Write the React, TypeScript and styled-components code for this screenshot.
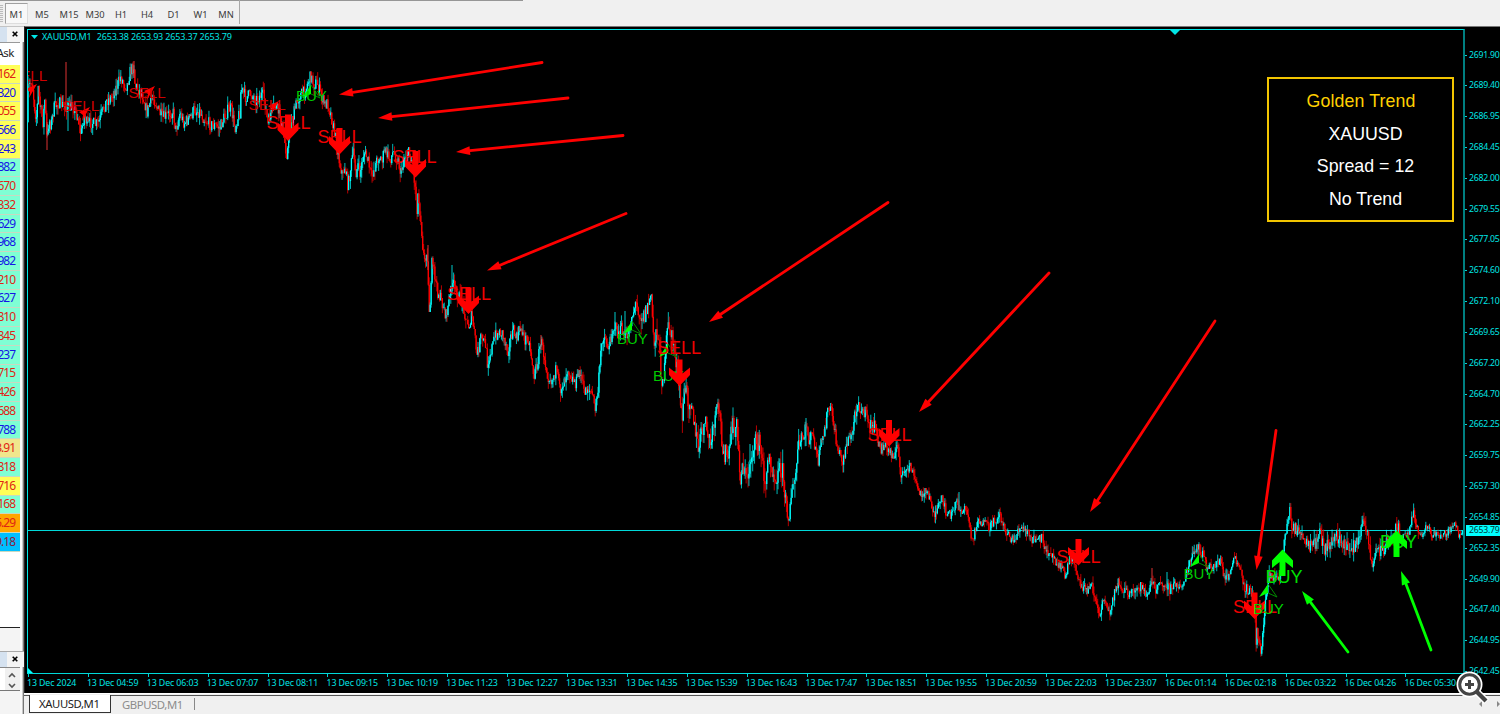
import styled, { createGlobalStyle, css } from 'styled-components';

const GlobalStyle = createGlobalStyle`
  * { box-sizing: border-box; }
  body {
    margin: 0;
    overflow: hidden;
    background: #f0f0f0;
    font-family: 'Noto Sans', 'Open Sans', sans-serif;
  }
`;

/* ── Data ─────────────────────────────────────────────────────────── */
const TIMEFRAMES = [
  { label: 'M1', width: 27 },
  { label: 'M5', width: 28 },
  { label: 'M15', width: 26 },
  { label: 'M30', width: 26 },
  { label: 'H1', width: 26 },
  { label: 'H4', width: 26 },
  { label: 'D1', width: 27 },
  { label: 'W1', width: 27 },
  { label: 'MN', width: 24 },
];

const YELLOW = '#ffff57';
const AQUA = '#7fffd4';
const UP = '#1414e6';
const DOWN = '#e02314';

const QUOTES: [string, string, string][] = [
  ['162', YELLOW, DOWN],
  ['320', YELLOW, UP],
  ['055', YELLOW, DOWN],
  ['566', YELLOW, UP],
  ['243', YELLOW, UP],
  ['882', AQUA, UP],
  ['670', AQUA, DOWN],
  ['332', AQUA, DOWN],
  ['629', AQUA, UP],
  ['968', AQUA, UP],
  ['982', AQUA, UP],
  ['210', AQUA, DOWN],
  ['627', AQUA, UP],
  ['810', AQUA, DOWN],
  ['845', AQUA, DOWN],
  ['237', AQUA, UP],
  ['715', AQUA, DOWN],
  ['426', AQUA, DOWN],
  ['688', AQUA, DOWN],
  ['788', AQUA, UP],
  ['3.91', '#f0e68c', DOWN],
  ['818', AQUA, DOWN],
  ['716', YELLOW, DOWN],
  ['168', AQUA, DOWN],
  ['5.29', '#ffa500', DOWN],
  ['9.18', '#00bfff', '#8c1c3c'],
];

const PRICES = [
  '2691.90', '2689.40', '2686.95', '2684.45', '2682.00', '2679.55', '2677.05',
  '2674.60', '2672.10', '2669.65', '2667.20', '2664.70', '2662.25', '2659.75',
  '2657.30', '2654.85', '2652.35', '2649.90', '2647.40', '2644.95', '2642.45',
];

const TIMES = [
  '13 Dec 2024', '13 Dec 04:59', '13 Dec 06:03', '13 Dec 07:07', '13 Dec 08:11',
  '13 Dec 09:15', '13 Dec 10:19', '13 Dec 11:23', '13 Dec 12:27', '13 Dec 13:31',
  '13 Dec 14:35', '13 Dec 15:39', '13 Dec 16:43', '13 Dec 17:47', '13 Dec 18:51',
  '13 Dec 19:55', '13 Dec 20:59', '13 Dec 22:03', '13 Dec 23:07', '16 Dec 01:14',
  '16 Dec 02:18', '16 Dec 03:22', '16 Dec 04:26', '16 Dec 05:30',
];

// swing points of the series
const SWINGS = `27,122 28,90 32,80 35,112 37,118 38,85 40,105 43,122 45,98 47,142 49,120
51,125 54,108 58,103 62,104 65,110 67,105 70,108 73,105 78,118 81,135 84,115 88,125 92,122
95,125 99,122 104,108 107,100 111,98 115,90 118,84 121,77 124,84 127,86 130,72 134,66 135,85
139,90 143,96 147,112 151,100 154,98 158,110 163,118 168,115 173,111 176,130 180,113 184,123
190,118 194,110 200,112 205,120 211,125 217,126 220,128 224,118 228,110 231,108 235,128
237,120 240,112 241,88 246,98 251,93 256,100 261,95 264,96 268,125 270,115 275,105 280,115
287,155 290,130 296,105 300,95 305,92 308,82 311,76 314,85 317,82 321,95 325,105 328,103
331,115 335,135 340,165 343,175 345,166 348,186 353,152 356,173 358,165 360,174 364,152
368,160 371,176 374,170 378,157 382,160 385,150 390,160 393,152 398,160 401,174 404,158
408,152 412,160 415,185 417,209 418,195 421,220 423,250 425,265 427,243 429,312 431,292
432,264 434,270 437,290 439,295 443,305 446,316 450,297 452,280 456,293 460,298 464,308
467,325 469,326 472,315 474,330 477,356 481,337 486,345 487,364 492,347 496,334 502,332
508,350 511,336 514,331 516,340 521,327 525,340 528,336 532,360 534,378 538,360 541,340
545,360 548,376 552,380 556,370 560,390 565,378 568,367 572,378 576,383 580,370 584,391
588,388 592,393 595,409 598,390 602,340 604,335 609,350 612,330 615,326 618,334 622,328
624,338 627,338 632,316 636,303 640,315 645,315 648,305 651,294 654,345 657,325 660,360
662,380 665,370 666,342 669,323 671,335 674,345 678,378 682,418 685,388 689,400 692,400
695,433 699,450 702,428 706,427 711,445 715,418 719,407 723,450 729,458 732,427 737,427
740,478 743,465 747,481 752,452 757,440 760,445 765,482 770,457 775,478 781,468 783,472
785,498 787,512 789,513 791,495 794,488 796,470 798,452 802,436 804,440 806,423 809,440
812,435 815,445 818,463 821,445 824,435 828,408 832,413 837,447 843,461 846,445 852,435
855,415 858,400 862,414 865,412 870,425 875,427 880,450 884,445 888,450 892,454 898,450
901,474 906,474 910,465 915,480 920,495 925,490 930,500 935,515 942,500 947,514 952,515
957,500 960,510 967,511 969,520 972,543 975,530 978,520 985,525 990,528 995,520 1000,514
1004,528 1009,535 1014,543 1018,530 1025,530 1033,540 1038,540 1043,538 1046,555 1050,549
1055,560 1061,565 1065,578 1070,557 1075,562 1080,585 1087,590 1092,585 1098,610 1100,623
1102,600 1105,598 1109,615 1112,600 1118,583 1124,590 1130,595 1136,590 1142,585 1147,597
1152,583 1156,590 1160,585 1165,582 1170,590 1175,585 1180,587 1185,580 1190,562 1198,547
1203,555 1208,570 1212,568 1218,561 1221,562 1224,579 1229,575 1235,559 1240,570 1245,589
1251,590 1255,610 1256,645 1257,628 1261,654 1264,620 1266,592 1269,573 1275,580 1280,575
1283,552 1286,530 1290,511 1293,530 1297,528 1302,540 1306,545 1312,549 1320,533 1324,549
1330,544 1336,536 1343,545 1350,549 1356,544 1360,535 1364,522 1367,526 1372,568 1376,550
1382,549 1390,540 1398,526 1402,540 1408,534 1413,511 1417,525 1420,537 1427,526 1432,534
1440,536 1448,532 1455,524 1459,536 1463,530`
  .split(/\s+/)
  .map(p => p.split(',').map(Number));

const EXTRA_WICKS = [
  [66, 62, 112, 1], [68, 98, 131, 0], [47, 122, 150, 1], [134, 61, 78, 1],
  [452, 265, 295, 0], [541, 335, 350, 1], [615, 312, 330, 0], [625, 311, 335, 0],
  [806, 418, 446, 0], [959, 492, 510, 0], [1152, 568, 585, 1], [1167, 572, 588, 0],
  [718, 402, 414, 1], [750, 444, 462, 0], [758, 432, 455, 1], [428, 245, 270, 1],
];

const BAR_STEP = 0.9375;

type Bar = { x: number; open: number; close: number; high: number; low: number };

const amplitude = (x: number) => {
  if (x > 640 && x < 800) return 20;
  if (x > 1290 && x < 1400) return 14;
  if (x > 1420) return 7;
  return x > 900 ? 10 : 12.5;
};

const buildBars = (): Bar[] => {
  let seed = 7;
  const rand = () => {
    seed = (seed * 16807) % 2147483647;
    return seed / 2147483647;
  };
  const bars: Bar[] = [];
  let open = SWINGS[0][1];
  let i = 0;
  for (let x = 28; x < 1463; x += BAR_STEP) {
    while (i < SWINGS.length - 2 && SWINGS[i + 1][0] < x) i += 1;
    const [x0, y0] = SWINGS[i];
    const [x1, y1] = SWINGS[i + 1];
    const amp = amplitude(x);
    const mid = y0 + ((y1 - y0) * (x - x0)) / (x1 - x0);
    const close = mid + (rand() - 0.5) * amp;
    const high = Math.min(open, close) - rand() ** 2 * amp * 0.7;
    const low = Math.max(open, close) + rand() ** 2 * amp * 0.7;
    bars.push({ x, open, close, high, low });
    open = close;
  }
  return bars;
};

const BARS = buildBars();

// [text, x, baseline, font size]
const SIGNALS: [string, number, number, number][] = [
  ['SELL', 10, 81, 15.2],
  ['SELL', 62, 111, 15.2],
  ['SELL', 128.5, 97.5, 15.2],
  ['SELL', 248.5, 109.5, 15.2],
  ['SELL', 266.5, 129, 18],
  ['SELL', 317.5, 143, 18],
  ['SELL', 392.5, 163, 18],
  ['SELL', 447, 300, 18],
  ['SELL', 657, 354, 18],
  ['SELL', 867.5, 441, 18],
  ['SELL', 1056.5, 563, 18],
  ['SELL', 1233, 613, 18],
  ['BUY', 296, 101, 15],
  ['BUY', 617, 344, 15],
  ['BUY', 653, 380.5, 15],
  ['BUY', 1183.5, 578.5, 15],
  ['BUY', 1265.5, 583, 18],
  ['BUY', 1380, 548, 18],
];

const DOWN_ARROWS = [
  [288, 141], [339.5, 154.5], [415.5, 177.5], [468.5, 314],
  [679.5, 386], [889, 446.5], [1078.5, 565.5], [1254.5, 619],
];
const UP_ARROWS = [[1282.5, 549.5], [1396.5, 530.5]];
const SELL_WEDGES = [[37, 84], [90, 107], [155, 86], [279, 101]];
const BUY_WEDGES = [[311, 85], [632, 321], [668, 344], [1199, 554], [1268, 584]];

// [tail x, tail y, tip x, tip y, colour]
const POINTERS: [number, number, number, number, string][] = [
  [542, 62.5, 339, 94.5, '#f00'],
  [568, 98, 378, 118, '#f00'],
  [623, 135.5, 456, 152, '#f00'],
  [626, 213.5, 487, 270.5, '#f00'],
  [888, 202.5, 709, 322, '#f00'],
  [1049, 273, 919, 412, '#f00'],
  [1215, 321, 1090, 512, '#f00'],
  [1276, 430.5, 1256.5, 570, '#f00'],
  [1348, 652, 1302, 591, '#0f0'],
  [1431, 650, 1401, 571, '#0f0'],
];

/* ── Shell ────────────────────────────────────────────────────────── */
const Terminal = styled.div`
  width: 1500px;
  height: 714px;
  display: flex;
  flex-direction: column;
  background: #f0f0f0;
  position: relative;
  overflow: hidden;
`;

const Toolbar = styled.div`
  height: 26px;
  flex: none;
  display: flex;
  align-items: flex-start;
  background: linear-gradient(#969696, #969696) 0 0 / 523px 1px no-repeat, #f0f0f0;
`;

const Grip = styled.div`
  width: 3px;
  height: 18px;
  margin: 5px 2px 0 0;
  background: repeating-linear-gradient(#bbb 0 1px, #eee 1px 2px);
`;

const Timeframes = styled.div`
  display: flex;
  width: 235px;
  height: 24px;
  padding-top: 3px;
  border-right: 1px solid #a8a8a8;
`;

const Timeframe = styled.div<{ $width: number; $active?: boolean }>`
  width: ${({ $width }) => $width}px;
  flex: none;
  height: 21px;
  display: flex;
  align-items: center;
  justify-content: center;
  font-size: 9.3px;
  color: #3c3c3c;
  padding-top: 2px;
  ${({ $active }) =>
    $active &&
    css`
      width: 23px;
      border: 1px solid #a0a0a0;
      border-right-color: #ddd;
      border-bottom-color: #ddd;
      background: #f8f8f8;
    `}
`;

const Workspace = styled.div`
  flex: 1;
  display: flex;
  min-height: 0;
`;

/* ── Market watch ─────────────────────────────────────────────────── */
const Side = styled.div`
  width: 24px;
  flex: none;
  display: flex;
  flex-direction: column;
  border-top: 1px solid #c4c4c4;
  background: linear-gradient(to right, #f4f4f4 20px, #fafafa 20px 22px, #c8c8c8 22px 23px, #777 23px);
`;

const PaneHead = styled.div`
  height: 15px;
  flex: none;
  display: flex;
  justify-content: flex-end;
  align-items: center;
  padding: 0 6px 1px 0;
  background: linear-gradient(to right, #d5e2f0 7px, #f4f4f4 7px);
`;

const ColumnHead = styled.div`
  width: 20px;
  height: 23px;
  flex: none;
  display: flex;
  align-items: center;
  justify-content: flex-end;
  padding: 0 6px 3px 0;
  border-top: 1px solid #999;
  background: #fff;
  font-size: 11.5px;
  letter-spacing: -0.5px;
  color: #222;
`;

const QuoteList = styled.div`
  width: 20px;
  height: 563px;
  flex: none;
  background: #fff;
  border-bottom: 1px solid #222;
`;

const Quote = styled.div<{ $bg: string; $color: string }>`
  width: 20px;
  height: 18.72px;
  display: flex;
  align-items: center;
  justify-content: flex-end;
  padding: 0 5px 1px 0;
  overflow: hidden;
  background: ${({ $bg }) => $bg};
  border-bottom: 1px solid #c9d8c0;
  color: ${({ $color }) => $color};
  font-size: 12px;
  letter-spacing: -1px;
`;

const SideGap = styled.div`
  height: 24px;
  flex: none;
  border-bottom: 1px solid #a8a8a8;
`;

const Scroller = styled.div`
  width: 20px;
  height: 24px;
  flex: none;
  display: flex;
  justify-content: flex-end;
  padding-right: 4px;
  border-top: 1px solid #888;
  border-bottom: 1px solid #777;
  background: linear-gradient(to right, #fff 5px, #f0f0f0 5px);
`;

/* ── Chart ────────────────────────────────────────────────────────── */
const Main = styled.div`
  flex: 1;
  min-width: 0;
  display: flex;
  flex-direction: column;
`;

const Window = styled.div`
  height: 667px;
  flex: none;
  display: grid;
  grid-template-columns: 1440px 35px;
  grid-template-rows: 645px 1fr;
  padding-top: 2px;
  background: #000;
  border-top: 1px solid #777;
  border-left: 1px solid #222;
  position: relative;
`;

const Plot = styled.div`
  margin-left: 2px;
  border: 1px solid #00e6e6;
  border-right: 2px solid #007f80;
  border-bottom-color: #00d8d8;
  position: relative;
`;

const Canvas = styled.svg`
  display: block;
  width: 1435px;
  height: 643px;
`;

const Caption = styled.div`
  position: absolute;
  left: 3px;
  top: 1px;
  display: flex;
  align-items: center;
  gap: 4px;
  color: #00e6e6;
  font-size: 9px;
  letter-spacing: -0.17px;
  line-height: 12px;
  white-space: pre;
`;

const Ohlc = styled.span`
  margin-left: -1px;
`;

const PriceAxis = styled.div`
  display: flex;
  flex-direction: column;
  padding-top: 10.5px;
  height: 660px;
`;

const Price = styled.div`
  height: 30.83px;
  flex: none;
  display: flex;
  align-items: flex-start;
  font-size: 8.7px;
  line-height: 31px;
  color: #00e6e6;
  white-space: nowrap;
  letter-spacing: -0.25px;
  &::before {
    content: '';
    width: 2px;
    height: 1px;
    margin: 15px 2px 0 0;
    background: #00d4d4;
  }
`;

const LastPrice = styled.div`
  position: absolute;
  right: 0;
  top: 498px;
  width: 34px;
  height: 11px;
  padding-left: 3px;
  overflow: hidden;
  background: #0ff;
  color: #003838;
  font-size: 8.7px;
  line-height: 11px;
  letter-spacing: -0.25px;
`;

const TimeAxis = styled.div`
  grid-column: 1 / -1;
  display: flex;
  padding-left: 2px;
`;

const Time = styled.div`
  width: 59.9px;
  flex: none;
  color: #00e6e6;
  font-size: 8.8px;
  line-height: 12px;
  white-space: nowrap;
  letter-spacing: -0.1px;
  &::before {
    content: '';
    display: block;
    width: 1px;
    height: 3px;
    margin-left: 1px;
    background: #00d4d4;
  }
`;

const InfoPanel = styled.div`
  position: absolute;
  left: 1239px;
  top: 47px;
  width: 187px;
  height: 145px;
  border: 2px solid #f2c500;
  background: #000;
  display: flex;
  flex-direction: column;
  align-items: center;
  padding: 6px 0 0 10px;
  font-family: 'Liberation Sans', Arial, sans-serif;
  font-size: 17.8px;
  line-height: 32.7px;
  color: #fff;
`;

const InfoTitle = styled.div`
  color: #ffd000;
  margin-right: 9px;
  letter-spacing: 0.1px;
`;

const InfoLine = styled.div`
  letter-spacing: 0;
`;

const Signal = styled.text`
  font-family: 'Liberation Sans', Arial, sans-serif;
`;

/* ── Chart tabs ───────────────────────────────────────────────────── */
const Tabs = styled.div`
  flex: 1;
  display: flex;
  border-top: 1px solid #fff;
  padding-left: 5px;
  background: linear-gradient(#555, #555) 0 1px / 100% 1px no-repeat, #f0f0f0;
`;

const Tab = styled.div<{ $active?: boolean }>`
  height: 18px;
  margin-top: 1px;
  display: flex;
  align-items: center;
  font-size: 11.3px;
  letter-spacing: -0.4px;
  color: #8c8c8c;
  padding-left: 11px;
  ${({ $active }) =>
    $active &&
    css`
      width: 82px;
      padding-left: 9px;
      background: #fff;
      color: #222;
      border: solid #333;
      border-width: 0 1px 1px 1px;
    `}
`;

const TabDivider = styled.div`
  width: 1px;
  height: 12px;
  margin: 4px 0 0 11px;
  background: #888;
`;

const TabArrows = styled.svg`
  width: 24px;
  height: 12px;
  margin: 5px 0 0 auto;
`;

const ZoomBadge = styled.svg`
  position: absolute;
  left: 1455px;
  top: 670px;
  width: 34px;
  height: 34px;
`;

/* ── Drawings ─────────────────────────────────────────────────────── */
const CloseIcon = () => (
  <svg width="6" height="6" viewBox="0 0 6 6">
    <path d="M.7.7 5.3 5.3M5.3.7.7 5.3" stroke="#000" strokeWidth="1.6" />
  </svg>
);

const Pointer = ({ from, to, color }: { from: number[]; to: number[]; color: string }) => {
  const len = Math.hypot(to[0] - from[0], to[1] - from[1]);
  const ux = (to[0] - from[0]) / len;
  const uy = (to[1] - from[1]) / len;
  const bx = to[0] - ux * 14;
  const by = to[1] - uy * 14;
  return (
    <g stroke={color} fill={color}>
      <line x1={from[0]} y1={from[1]} x2={bx} y2={by} strokeWidth="2.8" strokeLinecap="round" />
      <polygon
        strokeWidth="0"
        points={`${to[0]},${to[1]} ${bx - uy * 4.3},${by + ux * 4.3} ${bx + uy * 4.3},${by - ux * 4.3}`}
      />
    </g>
  );
};

const ARROW = 'M-3-26.5H3V-12.5L10.5-18.5V-11L0 0-10.5-11V-18.5L-3-12.5Z';

const Candles = () => (
  <g>
    {BARS.map(bar => {
      const color = bar.close > bar.open ? '#f00' : '#0ff';
      return (
        <g key={bar.x} stroke={color}>
          <line x1={bar.x} x2={bar.x} y1={bar.high} y2={bar.low} strokeWidth="0.9" opacity="0.8" />
          <line x1={bar.x} x2={bar.x} y1={bar.open} y2={bar.close} strokeWidth="1.3" />
        </g>
      );
    })}
    {EXTRA_WICKS.map(([x, y1, y2, red]) => (
      <line key={`${x}-${y1}`} x1={x} x2={x} y1={y1} y2={y2} stroke={red ? '#d33' : '#0cc'} />
    ))}
  </g>
);

const Chart = () => (
  <Canvas viewBox="28 30 1435 643">
    <rect x="27" y="530" width="1437" height="1" fill="#00d8d8" />
    <Candles />
    {SELL_WEDGES.map(([x, y]) => (
      <path key={x} transform={`translate(${x} ${y})`} d="M0 0-11 5-7 8-8 14Z" fill="#f00" />
    ))}
    {BUY_WEDGES.map(([x, y]) => (
      <g key={x} transform={`translate(${x} ${y})`}>
        <path d="M0 0-9 13 0 9Z" fill="#0f0" />
        <path d="M0 0 9 13 0 9" fill="none" stroke="#008a00" />
      </g>
    ))}
    {SIGNALS.map(([label, x, y, size]) => (
      <Signal
        key={`${label}-${x}`}
        x={x}
        y={y}
        fontSize={size}
        fill={label === 'BUY' ? (size > 16 ? '#00e000' : '#00c800') : size > 16 ? '#f00000' : '#d00000'}
      >
        {label}
      </Signal>
    ))}
    {DOWN_ARROWS.map(([x, y]) => (
      <path key={x} d={ARROW} transform={`translate(${x} ${y})`} fill="#f00" />
    ))}
    {UP_ARROWS.map(([x, y]) => (
      <path key={x} d={ARROW} transform={`translate(${x} ${y}) scale(1 -1)`} fill="#0f0" />
    ))}
    {/* sits on top of the last sell arrow */}
    <Signal x="1253" y="613.5" fontSize="15" fill="#00d800">
      BUY
    </Signal>
    {POINTERS.map(([x1, y1, x2, y2, color]) => (
      <Pointer key={x1} from={[x1, y1]} to={[x2, y2]} color={color} />
    ))}
    <path d="M1170 30h10l-5 5z" fill="#00e6e6" />
    <path d="M28 668v5h5z" fill="#0ff" />
  </Canvas>
);

const App = () => (
  <>
    <GlobalStyle />
    <Terminal>
      <Toolbar>
        <Grip />
        <Timeframes>
          {TIMEFRAMES.map(({ label, width }) => (
            <Timeframe key={label} $width={width} $active={label === 'M1'}>
              {label}
            </Timeframe>
          ))}
        </Timeframes>
      </Toolbar>
      <Workspace>
        <Side>
          <PaneHead>
            <CloseIcon />
          </PaneHead>
          <ColumnHead>Ask</ColumnHead>
          <QuoteList>
            {QUOTES.map(([value, bg, color]) => (
              <Quote key={value} $bg={bg} $color={color}>
                {value}
              </Quote>
            ))}
          </QuoteList>
          <SideGap />
          <PaneHead>
            <CloseIcon />
          </PaneHead>
          <Scroller>
            <svg width="8" height="22" viewBox="0 0 8 22">
              <path d="M1 9 4 6 7 9M1 16 4 19 7 16" fill="none" stroke="#555" strokeWidth="1.6" />
            </svg>
          </Scroller>
        </Side>
        <Main>
          <Window>
            <Plot>
              <Chart />
              <Caption>
                <svg width="7" height="4" viewBox="0 0 7 4">
                  <path d="M0 0h7L3.5 4z" fill="#00e6e6" />
                </svg>
                XAUUSD,M1
                <Ohlc> 2653.38 2653.93 2653.37 2653.79</Ohlc>
              </Caption>
              <InfoPanel>
                <InfoTitle>Golden Trend</InfoTitle>
                <InfoLine>XAUUSD</InfoLine>
                <InfoLine>Spread = 12</InfoLine>
                <InfoLine>No Trend</InfoLine>
              </InfoPanel>
            </Plot>
            <PriceAxis>
              {PRICES.map(price => (
                <Price key={price}>{price}</Price>
              ))}
            </PriceAxis>
            <TimeAxis>
              {TIMES.map(time => (
                <Time key={time}>{time}</Time>
              ))}
            </TimeAxis>
            <LastPrice>2653.79</LastPrice>
          </Window>
          <Tabs>
            <Tab $active>XAUUSD,M1</Tab>
            <Tab>GBPUSD,M1</Tab>
            <TabDivider />
            <TabArrows viewBox="0 0 24 12">
              <path d="M6 2v6L3 5zM21 2v6l3-3z" fill="#888" />
            </TabArrows>
          </Tabs>
        </Main>
      </Workspace>
      <ZoomBadge viewBox="0 0 34 34" fill="none" strokeLinecap="butt">
        <path d="M21 21 31.5 31.5" stroke="#fff" strokeWidth="7" />
        <circle cx="14.5" cy="14.5" r="10" fill="#fff" stroke="#fff" strokeWidth="6" />
        <circle cx="14.5" cy="14.5" r="9.8" stroke="#444" strokeWidth="3" />
        <path d="M21.5 21.5 31 31" stroke="#444" strokeWidth="4.2" />
        <path d="M14.5 10v9M10 14.5h9" stroke="#444" strokeWidth="3" />
      </ZoomBadge>
    </Terminal>
  </>
);

export default App;
